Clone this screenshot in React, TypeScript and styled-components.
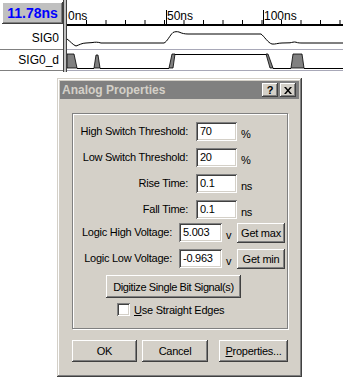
import React from 'react'
import styled, { createGlobalStyle } from 'styled-components'

const GlobalStyle = createGlobalStyle`
  html, body {
    margin: 0;
    padding: 0;
    background: #ffffff;
  }
  body {
    width: 343px;
    height: 377px;
    overflow: hidden;
    font-family: "Liberation Sans", Arial, sans-serif;
  }
`

const WavePanel = styled.div`
  display: flex;
  height: 72px;
`

const NameColumn = styled.div`
  width: 63px;
  display: flex;
  flex-direction: column;
`

const TimeCell = styled.div`
  height: 26px;
  box-sizing: border-box;
  padding: 2px 0 2px 2px;
`

const TimeBox = styled.div`
  height: 22px;
  background: #c0c0c0;
  box-shadow: inset -1px -1px #404040, inset 1px 1px #ffffff, inset -2px -2px #808080;
  color: #0000ff;
  font: bold 14px "Liberation Sans", Arial, sans-serif;
  display: flex;
  align-items: center;
  justify-content: center;
`

const NameRow = styled.div<{ $h: number }>`
  height: ${p => p.$h}px;
  box-sizing: border-box;
  border-bottom: 1px solid #808080;
  display: flex;
  align-items: center;
  justify-content: flex-end;
  padding-right: 4px;
  font-size: 12px;
  color: #000;
`

const Splitter = styled.div`
  width: 2px;
  height: 72px;
  background: #c0c0c0;
  border-left: 1px solid #404040;
  border-right: 1px solid #404040;
`

const WaveArea = styled.svg`
  display: block;
  width: 276px;
  height: 72px;
`

const Dialog = styled.div`
  margin: 6px 0 0 57px;
  width: 245px;
  height: 299px;
  box-sizing: border-box;
  padding: 3px;
  background: #d4d0c8;
  box-shadow: inset -1px -1px #404040, inset 1px 1px #d4d0c8, inset -2px -2px #808080, inset 2px 2px #ffffff;
  display: flex;
  flex-direction: column;
  font: 11px "Liberation Sans", Arial, sans-serif;
  letter-spacing: -0.25px;
  color: #000;
`

const TitleBar = styled.div`
  height: 18px;
  background: #808080;
  display: flex;
  align-items: center;
  padding: 0 3px 0 2px;
`

const Title = styled.span`
  flex: 1;
  color: #d4d0c8;
  font-weight: bold;
  font-size: 12px;
  letter-spacing: 0;
`

const TitleButton = styled.div`
  width: 16px;
  height: 14px;
  margin-left: 2px;
  background: #d4d0c8;
  box-shadow: inset -1px -1px #404040, inset 1px 1px #ffffff, inset -2px -2px #808080;
  display: flex;
  align-items: center;
  justify-content: center;
  font: bold 11px "Liberation Sans", Arial, sans-serif;
`

const Body = styled.div`
  padding: 14px 11px 0 12px;
  display: flex;
  flex-direction: column;
`

const GroupBox = styled.div`
  height: 216px;
  box-sizing: border-box;
  border: 1px solid #808080;
  box-shadow: inset 1px 1px #ffffff, 1px 1px #ffffff;
  padding-top: 8px;
  display: flex;
  flex-direction: column;
`

const FieldRow = styled.div<{ $mt: number }>`
  display: flex;
  align-items: flex-start;
  margin-top: ${p => p.$mt}px;
`

const Label = styled.span<{ $w: number; $gap: number }>`
  width: ${p => p.$w}px;
  margin-right: ${p => p.$gap}px;
  text-align: right;
  line-height: 19px;
  height: 19px;
  white-space: nowrap;
`

const Field = styled.div<{ $w: number }>`
  width: ${p => p.$w}px;
  height: 19px;
  box-sizing: border-box;
  background: #ffffff;
  box-shadow: inset 1px 1px #808080, inset -1px -1px #ffffff, inset 2px 2px #404040, inset -2px -2px #d4d0c8;
  padding: 0 3px 0 4px;
  line-height: 19px;
  white-space: nowrap;
`

const Unit = styled.span<{ $w?: number }>`
  width: ${p => (p.$w ? `${p.$w}px` : 'auto')};
  height: 19px;
  box-sizing: border-box;
  padding: 5px 0 0 4px;
  line-height: 14px;
`

const Button = styled.div<{ $w: number; $h: number }>`
  width: ${p => p.$w}px;
  height: ${p => p.$h}px;
  box-sizing: border-box;
  background: #d4d0c8;
  box-shadow: inset -1px -1px #404040, inset 1px 1px #ffffff, inset -2px -2px #808080, inset 2px 2px #d4d0c8;
  display: flex;
  align-items: center;
  justify-content: center;
  white-space: nowrap;
`

const DigitizeButton = styled(Button)`
  margin: 6px 0 0 33px;
  letter-spacing: -0.4px;
`

const CheckRow = styled.label`
  display: flex;
  align-items: center;
  margin: 5px 0 0 44px;
  height: 13px;
`

const CheckBox = styled.span`
  width: 13px;
  height: 13px;
  box-sizing: border-box;
  background: #ffffff;
  box-shadow: inset 1px 1px #808080, inset -1px -1px #ffffff, inset 2px 2px #404040, inset -2px -2px #d4d0c8;
  margin-right: 4px;
`

const ButtonRow = styled.div`
  display: flex;
  gap: 5px;
  margin-top: 11px;
  width: 216px;
`

const PushRight = styled.div`
  margin-left: auto;
`

const Key = styled.span`
  text-decoration: underline;
`

const minorTicks = Array.from({ length: 15 }, (_, i) => 67 + i * 19.5).filter(x => x > 70)

const analogPath =
  'M67,39 C70,41 73,45 76,46 C79,45 82,43 86,43 L92,42.6 C95,42 98,42 101,43 L164,43 ' +
  'C167,42 170,35 173,32.5 C175,31.5 177,31.5 179,32 C182,33.5 185,34 188,34 L261,34 ' +
  'C264,36 268,43 272,44 C275,44.5 278,43 282,43 L290,42.8 C292,42.5 294,41.6 296,42.2 C298,43 300,43 303,43 L343,43'

function Waves() {
  return (
    <WaveArea viewBox="67 0 276 72">
      {/* ruler */}
      {minorTicks.map(x => (
        <line key={x} x1={x} x2={x} y1={20} y2={25} stroke="#000" strokeWidth={1} />
      ))}
      <line x1={166.5} x2={166.5} y1={10} y2={25} stroke="#000" />
      <line x1={263.5} x2={263.5} y1={10} y2={25} stroke="#000" />
      <rect x={67} y={24} width={276} height={2} fill="#000" />
      <text x={68} y={20} fontSize={12} fontFamily="Liberation Sans, Arial, sans-serif">0ns</text>
      <text x={167} y={20} fontSize={12} fontFamily="Liberation Sans, Arial, sans-serif">50ns</text>
      <text x={264} y={20} fontSize={12} fontFamily="Liberation Sans, Arial, sans-serif">100ns</text>

      {/* analog SIG0 */}
      <path d={analogPath} fill="none" stroke="#000" strokeWidth={1} />
      <line x1={67} x2={343} y1={49.5} y2={49.5} stroke="#a8a8b8" />

      {/* digital SIG0_d */}
      <g fill="#808080" stroke="#000" strokeWidth={0.8} strokeLinejoin="round">
        <polygon points="67,54 74,54 77,68 67,68" />
        <polygon points="94,68 96,55 98,55 100,68" />
        <polygon points="169,68 172,54 175,54 173,68" />
        <polygon points="266,54 268,54 273,68 270,68" />
        <polygon points="291,68 293,54 302,54 304,68" />
      </g>
      <g stroke="#000" strokeWidth={1}>
        <line x1={77} x2={94} y1={68.5} y2={68.5} />
        <line x1={100} x2={169} y1={68.5} y2={68.5} />
        <line x1={175} x2={266} y1={54.5} y2={54.5} />
        <line x1={273} x2={291} y1={68.5} y2={68.5} />
        <line x1={304} x2={343} y1={68.5} y2={68.5} />
      </g>
      <line x1={67} x2={343} y1={70.5} y2={70.5} stroke="#a8a8b8" />
    </WaveArea>
  )
}

export default function App() {
  return (
    <>
      <GlobalStyle />
      <WavePanel>
        <NameColumn>
          <TimeCell>
            <TimeBox>11.78ns</TimeBox>
          </TimeCell>
          <NameRow $h={24}>SIG0</NameRow>
          <NameRow $h={21}>SIG0_d</NameRow>
        </NameColumn>
        <Splitter />
        <Waves />
      </WavePanel>

      <Dialog>
        <TitleBar>
          <Title>Analog Properties</Title>
          <TitleButton>?</TitleButton>
          <TitleButton>
            <svg width="8" height="7" viewBox="0 0 8 7">
              <path d="M0,0 L2,0 L4,2.5 L6,0 L8,0 L5,3.5 L8,7 L6,7 L4,4.5 L2,7 L0,7 L3,3.5 Z" fill="#000" />
            </svg>
          </TitleButton>
        </TitleBar>

        <Body>
          <GroupBox>
            <FieldRow $mt={0}>
              <Label $w={115} $gap={8}>High Switch Threshold:</Label>
              <Field $w={41}>70</Field>
              <Unit>%</Unit>
            </FieldRow>
            <FieldRow $mt={7}>
              <Label $w={115} $gap={8}>Low Switch Threshold:</Label>
              <Field $w={41}>20</Field>
              <Unit>%</Unit>
            </FieldRow>
            <FieldRow $mt={7}>
              <Label $w={115} $gap={8}>Rise Time:</Label>
              <Field $w={41}>0.1</Field>
              <Unit>ns</Unit>
            </FieldRow>
            <FieldRow $mt={7}>
              <Label $w={115} $gap={8}>Fall Time:</Label>
              <Field $w={41}>0.1</Field>
              <Unit>ns</Unit>
            </FieldRow>
            <FieldRow $mt={4}>
              <Label $w={99} $gap={7}>Logic High Voltage:</Label>
              <Field $w={43}>5.003</Field>
              <Unit $w={15}>v</Unit>
              <Button $w={48} $h={20}>Get max</Button>
            </FieldRow>
            <FieldRow $mt={6}>
              <Label $w={99} $gap={7}>Logic Low Voltage:</Label>
              <Field $w={43}>-0.963</Field>
              <Unit $w={15}>v</Unit>
              <Button $w={48} $h={20}>Get min</Button>
            </FieldRow>
            <DigitizeButton $w={135} $h={23}>Digitize Single Bit Signal(s)</DigitizeButton>
            <CheckRow>
              <CheckBox />
              <span>
                <Key>U</Key>se Straight Edges
              </span>
            </CheckRow>
          </GroupBox>

          <ButtonRow>
            <Button $w={65} $h={22}>OK</Button>
            <Button $w={66} $h={22}>Cancel</Button>
            <PushRight>
              <Button $w={69} $h={22}>
                <span>
                  <Key>P</Key>roperties...
                </span>
              </Button>
            </PushRight>
          </ButtonRow>
        </Body>
      </Dialog>
    </>
  )
}
